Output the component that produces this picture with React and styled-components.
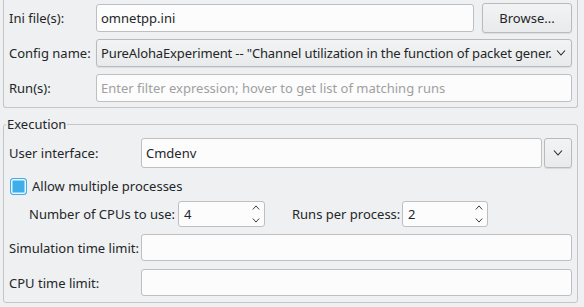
import React from 'react';
import styled, { createGlobalStyle } from 'styled-components';

const GlobalStyle = createGlobalStyle`
    html, body {
        margin: 0;
        padding: 0;
        background: #eff0f1;
    }
    body {
        font-family: "Noto Sans", "DejaVu Sans", sans-serif;
        font-size: 13px;
        color: #232629;
    }
`;

function Chevron({ up, size = 9 }) {
    return (
        <svg width={size} height={size / 2 + 1} viewBox="0 0 10 6" fill="none">
            <path
                d={up ? 'M1 5.5 L5 1 L9 5.5' : 'M1 0.5 L5 5 L9 0.5'}
                stroke="#232629"
                strokeWidth="1.1"
            />
        </svg>
    );
}

function SpinBox({ value, width }) {
    return (
        <Spin $width={width}>
            <span>{value}</span>
            <SpinArrows>
                <Chevron up size={8} />
                <Chevron size={8} />
            </SpinArrows>
        </Spin>
    );
}

export default function App() {
    return (
        <Page>
            <GlobalStyle />
            <TopGroup>
                <FormRow>
                    <Label $width={87}>Ini file(s):</Label>
                    <TextField>omnetpp.ini</TextField>
                    <Button>Browse...</Button>
                </FormRow>
                <FormRow>
                    <Label $width={87}>Config name:</Label>
                    <Combo>
                        <ComboText>PureAlohaExperiment -- "Channel utilization in the function of packet gener.</ComboText>
                        <Chevron size={10} />
                    </Combo>
                </FormRow>
                <FormRow>
                    <Label $width={87}>Run(s):</Label>
                    <TextField $placeholder>Enter filter expression; hover to get list of matching runs</TextField>
                </FormRow>
            </TopGroup>

            <Group>
                <Legend>Execution</Legend>
                <ExecRow $height={30}>
                    <Label $width={132}>User interface:</Label>
                    <TextField>Cmdenv</TextField>
                    <DropButton>
                        <Chevron size={10} />
                    </DropButton>
                </ExecRow>
                <ExecRow $height={20} $top={8}>
                    <CheckBox />
                    <CheckLabel>Allow multiple processes</CheckLabel>
                </ExecRow>
                <ExecRow $height={26} $top={5} $indent={20}>
                    <Label $width={149}>Number of CPUs to use:</Label>
                    <SpinBox value="4" width={87} />
                    <Label $width={110} $left={27}>Runs per process:</Label>
                    <SpinBox value="2" width={86} />
                </ExecRow>
                <ExecRow $height={27} $top={7}>
                    <Label $width={132}>Simulation time limit:</Label>
                    <TextField />
                </ExecRow>
                <ExecRow $height={27} $top={8}>
                    <Label $width={132}>CPU time limit:</Label>
                    <TextField />
                </ExecRow>
            </Group>
        </Page>
    );
}

const Page = styled.div`
    width: 584px;
    height: 307px;
    padding: 0 0 0 3px;
    box-sizing: border-box;
    overflow: hidden;
`;

const TopGroup = styled.div`
    width: 575px;
    box-sizing: border-box;
    border: 1px solid #c3c5c7;
    border-top: none;
    border-radius: 0 0 3px 3px;
    padding: 4px 5px 5px 5px;
    display: flex;
    flex-direction: column;
    gap: 7px;
`;

const FormRow = styled.div`
    display: flex;
    align-items: stretch;
    height: 28px;
`;

const Label = styled.div`
    flex: 0 0 ${p => p.$width}px;
    margin-left: ${p => p.$left || 0}px;
    display: flex;
    align-items: center;
    white-space: nowrap;
`;

const TextField = styled.div`
    flex: 1;
    min-width: 0;
    box-sizing: border-box;
    background: #fcfcfc;
    border: 1px solid #bdbfc1;
    border-radius: 3px;
    padding: 0 4px;
    display: flex;
    align-items: center;
    white-space: nowrap;
    overflow: hidden;
    color: ${p => (p.$placeholder ? '#9ea0a2' : '#232629')};
`;

const Button = styled.div`
    flex: 0 0 90px;
    margin: -1px 0 -1px 8px;
    box-sizing: border-box;
    border: 1px solid #b8babc;
    border-radius: 3px;
    background: linear-gradient(#f2f3f3, #e9eaeb);
    box-shadow: 0 1px 1px rgba(0, 0, 0, 0.08);
    display: flex;
    align-items: center;
    justify-content: center;
`;

const Combo = styled.div`
    flex: 1;
    min-width: 0;
    box-sizing: border-box;
    border: 1px solid #b8babc;
    border-radius: 3px;
    background: linear-gradient(#f2f3f3, #e9eaeb);
    box-shadow: 0 1px 1px rgba(0, 0, 0, 0.08);
    display: flex;
    align-items: center;
    gap: 3px;
    padding: 0 5px 0 4px;
`;

const ComboText = styled.span`
    flex: 1;
    min-width: 0;
    white-space: nowrap;
    overflow: hidden;
    letter-spacing: -0.13px;
`;

const Group = styled.fieldset`
    width: 575px;
    box-sizing: border-box;
    margin: 8px 0 0 0;
    padding: 6px 5px 6px 5px;
    border: 1px solid #c3c5c7;
    border-radius: 3px;
    min-width: 0;
`;

const Legend = styled.legend`
    padding: 0 1px;
    margin-left: -3px;
    line-height: 16px;
`;

const ExecRow = styled.div`
    display: flex;
    align-items: stretch;
    height: ${p => p.$height}px;
    margin-top: ${p => p.$top || 0}px;
    padding-left: ${p => p.$indent || 0}px;
`;

const DropButton = styled.div`
    flex: 0 0 28px;
    margin-left: 2px;
    box-sizing: border-box;
    border: 1px solid #b8babc;
    border-radius: 3px;
    background: linear-gradient(#f2f3f3, #e9eaeb);
    box-shadow: 0 1px 1px rgba(0, 0, 0, 0.1);
    display: flex;
    align-items: center;
    justify-content: center;
`;

const CheckBox = styled.div`
    align-self: center;
    width: 17px;
    height: 17px;
    margin-left: 1px;
    box-sizing: border-box;
    border: 1px solid #3daee9;
    border-radius: 3px;
    background: #3daee9;
    box-shadow: inset 0 0 0 1.5px #eef6fb;
`;

const CheckLabel = styled.div`
    display: flex;
    align-items: center;
    margin-left: 5px;
`;

const Spin = styled.div`
    flex: 0 0 ${p => p.$width}px;
    box-sizing: border-box;
    background: #fcfcfc;
    border: 1px solid #bdbfc1;
    border-radius: 3px;
    padding: 0 4px 0 5px;
    display: flex;
    align-items: center;
    justify-content: space-between;
`;

const SpinArrows = styled.div`
    display: flex;
    flex-direction: column;
    justify-content: space-between;
    height: 18px;
`;
